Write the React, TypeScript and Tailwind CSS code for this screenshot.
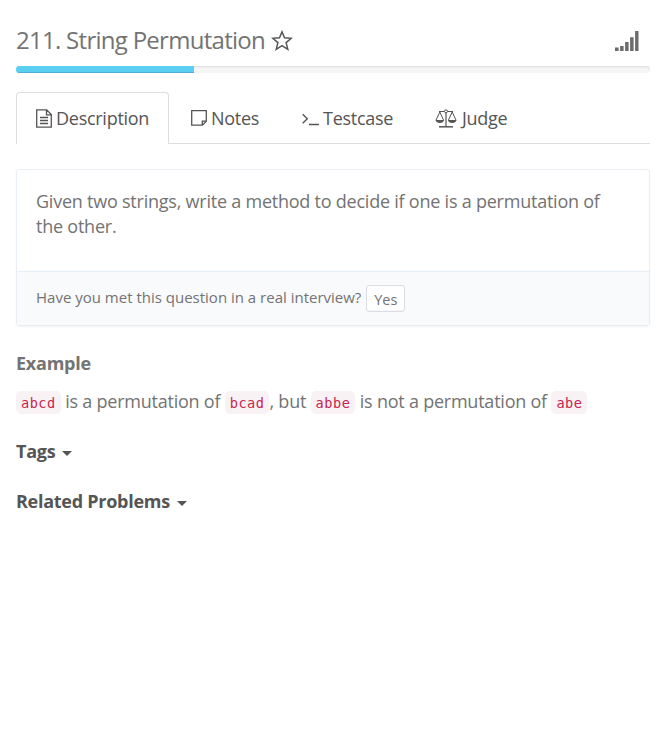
import React from "react";

function Code({ children }: { children: string }) {
  return (
    <code className="inline-block h-[23px] rounded-[5px] bg-[#f9f2f4] px-[5px] align-middle font-['DejaVu_Sans_Mono',monospace] text-[13.6px] leading-[24px] tracking-[0.5px] text-[#c7254e]">
      {children}
    </code>
  );
}

function Star() {
  return (
    <svg width="22" height="21" viewBox="0 0 22 21" fill="none" stroke="#555" strokeWidth="1.5" strokeLinejoin="miter">
      <path d="M11 1.8 L13.5 7.8 L20.3 8.3 L15.1 12.6 L16.8 19.3 L11 15.7 L5.2 19.3 L6.9 12.6 L1.7 8.3 L8.5 7.8 Z" />
    </svg>
  );
}

function Signal() {
  return (
    <svg width="24" height="20" viewBox="0 0 24 20" fill="#6c6c6c">
      <path d="M0 16.4h3.6V20H0zM5.1 15h3.5v5H5.1zM10.1 11h3.5v9h-3.5zM15.1 6.3h3.5V20h-3.5zM20.1 0h3.4v20h-3.4z" />
    </svg>
  );
}

function DocIcon() {
  return (
    <svg width="16" height="19" viewBox="0 0 16 19" fill="none" stroke="#555" strokeWidth="1.3">
      <path d="M.7.8h10l4.6 4.8v12.6H.7zM10.5.8v5h4.9M4 8.5h8M4 11.5h8M4 14.5h8" />
    </svg>
  );
}

function NoteIcon() {
  return (
    <svg width="16" height="16" viewBox="0 0 16 16" fill="none" stroke="#555" strokeWidth="1.3">
      <path d="M.7.7h14.6v10.6l-3.8 3.9H.7zM11.3 15v-3.9h4" />
    </svg>
  );
}

function PromptIcon() {
  return (
    <svg width="17" height="13" viewBox="0 0 17 13" fill="none" stroke="#555" strokeWidth="1.4">
      <path d="M.7 1.2l4.6 4.5-4.6 4.6M7 11.5h10" />
    </svg>
  );
}

function ScaleIcon() {
  return (
    <svg width="22" height="19" viewBox="0 0 22 19" fill="none" stroke="#555" strokeWidth="1">
      <path d="M4 2.5h5.4M12.6 2.5H18M11 4v13" strokeWidth="1.2" />
      <circle cx="11" cy="2.3" r="1.5" />
      <path d="M4.8 3L1 11.2M4.8 3l3.8 8.2M17.2 3l-3.8 8.2M17.2 3L21 11.2" />
      <path d="M.5 11h8.6c-.4 2-2 3-4.3 3S.9 13 .5 11zM12.9 11h8.6c-.4 2-2 3-4.3 3s-3.9-1-4.3-3z" fill="#555" stroke="none" />
      <path d="M4 17.8h14" strokeWidth="1.5" />
    </svg>
  );
}

function Caret() {
  return (
    <svg className="mt-[4px]" width="10" height="5" viewBox="0 0 10 5" fill="#555">
      <path d="M0 0h10L5 5z" />
    </svg>
  );
}

export default function App() {
  return (
    <main className="h-[731px] w-[667px] bg-white pr-[17px] pl-4 font-['Open_Sans',sans-serif] text-[18px] tracking-[-0.23px] text-[#737373]">
      <header className="flex h-[66px] items-start justify-between pt-[23px]">
        <h1 className="flex items-start text-[24px] leading-[33px] font-normal tracking-[-0.72px]">
          <span className="w-[249px] whitespace-nowrap">211. String Permutation</span>
          <span className="mt-[7px] ml-[6px]"><Star /></span>
        </h1>
        <span className="mt-[8px] mr-[11px]"><Signal /></span>
      </header>
      <div className="h-[7px] overflow-hidden rounded-[4px] bg-[#f5f5f5] shadow-[inset_0_1px_2px_rgba(0,0,0,0.1)]">
        <div className="h-full w-[178px] bg-[#5bcff2] shadow-[inset_0_-1px_0_rgba(0,0,0,0.15)]" />
      </div>

      <nav className="mt-[19px] flex h-[52px] text-[18px] leading-[26px] tracking-[-0.27px] text-[#555]">
        <div className="flex w-[153px] rounded-t-[4px] border border-b-0 border-[#ddd] pt-[12px] pl-[19px]">
          <span className="mt-[4px] mr-1 shrink-0"><DocIcon /></span>Description
        </div>
        <div className="flex w-[110px] border-b border-[#ddd] pt-[13px] pl-[22px]">
          <span className="mt-[5px] mr-1 shrink-0"><NoteIcon /></span>Notes
        </div>
        <div className="flex w-[134px] border-b border-[#ddd] pt-[13px] pl-[23px]">
          <span className="mt-[8px] mr-[4px] shrink-0"><PromptIcon /></span>Testcase
        </div>
        <div className="flex flex-1 border-b border-[#ddd] pt-[13px] pl-[22px]">
          <span className="mt-[4px] mr-[5px] shrink-0"><ScaleIcon /></span>Judge
        </div>
      </nav>

      <section className="mt-[25px] h-[157px] rounded-[3px] border border-[#e9eef5] shadow-[0_1px_2px_rgba(0,0,0,0.05)]">
        <p className="h-[101px] px-[19px] pt-[19px] leading-[25px]">
          Given two strings, write a method to decide if one is a permutation of the other.
        </p>
        <div className="flex h-[54px] items-start border-t border-[#e6eef6] bg-[#f9fafc] pl-[19px] text-[15px] leading-[22px] tracking-normal">
          <span className="mt-[14px] whitespace-nowrap">Have you met this question in a real interview?</span>
          <button className="mt-[13px] ml-[5px] h-[27px] w-[39px] rounded-[3px] border border-[#d9dee4] bg-white text-[14.5px] leading-[27px] shadow-[inset_0_-1px_1px_rgba(0,0,0,0.04)]">Yes</button>
        </div>
      </section>

      <h2 className="mt-[25px] text-[18px] leading-[25px] font-bold">Example</h2>
      <p className="mt-[12px] flex h-[26px] leading-[26px] whitespace-pre">
        <span className="mt-[3px] flex"><Code>abcd</Code></span>
        <span> is a permutation of </span>
        <span className="mt-[3px] flex"><Code>bcad</Code></span>
        <span>, but </span>
        <span className="mt-[3px] flex"><Code>abbe</Code></span>
        <span> is not a permutation of </span>
        <span className="mt-[3px] flex"><Code>abe</Code></span>
      </p>
      <h2 className="mt-[24px] flex h-[26px] items-center gap-[7px] text-[18px] leading-[26px] font-bold tracking-[-0.27px] text-[#555]">Tags <Caret /></h2>
      <h2 className="mt-[24px] flex h-[26px] items-center gap-[7px] text-[18px] leading-[26px] font-bold tracking-[-0.27px] text-[#555]">Related Problems <Caret /></h2>
    </main>
  );
}
